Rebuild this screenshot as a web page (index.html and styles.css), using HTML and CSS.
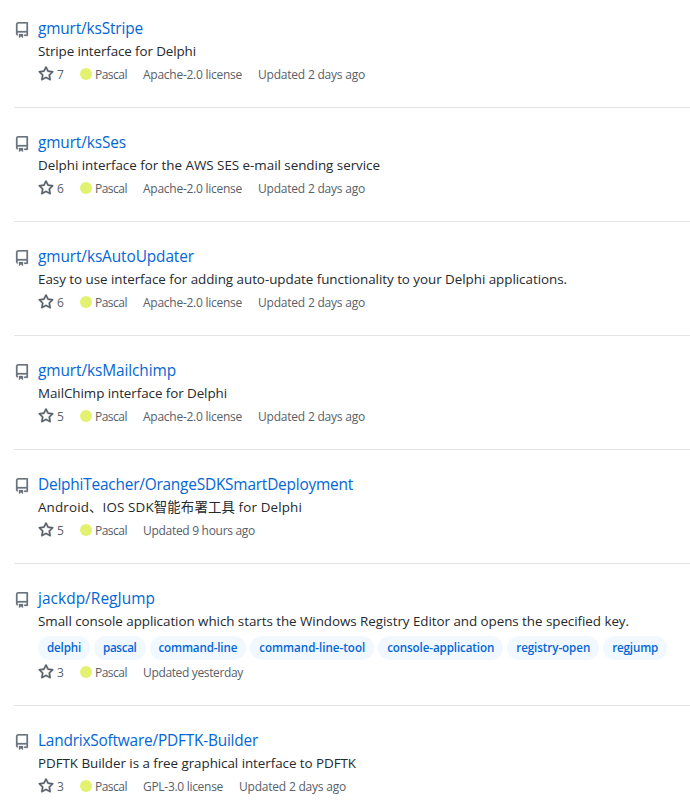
FILE: index.html
```
<!DOCTYPE html>
<html lang="en">
<head>
<meta charset="utf-8">
<title>Repositories</title>
<link rel="stylesheet" href="styles.css">
</head>
<body>
<ul class="repo-list" id="repos"></ul>
<script src="app.js"></script>
</body>
</html>
```
FILE: styles.css
```
* { box-sizing: border-box; }
body {
  margin: 0;
  height: 808px;
  overflow: hidden;
  background: #fff;
  color: #24292e;
  font: 13.4px/21px "Open Sans", "Noto Sans CJK SC", sans-serif;
}
.repo-list { list-style: none; margin: -6px 0 0 14px; padding: 0; }
.repo {
  display: flex;
  gap: 8px;
  padding: 24px 0 23px;
  border-bottom: 1px solid #e1e4e8;
}
.icon { display: block; flex: none; width: 16px; height: 16px; fill: #6a737d; stroke: #6a737d; stroke-width: .25; }
.repo-icon { margin-top: 4px; }
.body { flex: 1; min-width: 0; white-space: nowrap; }
.name { height: 23px; font-size: 15.4px; line-height: 22px; }
.name a { color: #0366d6; text-decoration: none; }
.name span, .desc span, .meta span, .topic span { display: inline-block; }
.desc { height: 21px; margin: 0; }
.topics { display: flex; gap: 4px; margin: 4px 0 1px; }
.topic {
  height: 24px;
  padding: 0 9px;
  border-radius: 12px;
  background: #f1f8ff;
  color: #0366d6;
  font-size: 11.6px;
  font-weight: 600;
  line-height: 24px;
  text-decoration: none;
}
.meta {
  display: flex;
  gap: 16px;
  height: 18px;
  margin-top: 4px;
  color: #586069;
  font-size: 12px;
  line-height: 18px;
}
.stars, .lang { display: flex; gap: 3px; }
.stars .icon { fill: #586069; stroke: #586069; }
.dot { width: 12px; height: 12px; margin-top: 2px; border-radius: 50%; background: #e3f171; }
```
FILE: app.js
```
const repoPath = "M2 2.5A2.5 2.5 0 014.5 0h8.75a.75.75 0 01.75.75v12.5a.75.75 0 01-.75.75h-2.5a.75.75 0 110-1.5h1.75v-2h-8a1 1 0 00-.714 1.7.75.75 0 01-1.072 1.05A2.495 2.495 0 012 11.5v-9zm10.5-1V9h-8c-.356 0-.694.074-1 .208V2.5a1 1 0 011-1h8zM5 12.25v3.25a.25.25 0 00.4.2l1.45-1.087a.25.25 0 01.3 0L8.6 15.7a.25.25 0 00.4-.2v-3.25a.25.25 0 00-.25-.25h-3.5a.25.25 0 00-.25.25z";
const starPath = "M8 .25a.75.75 0 01.673.418l1.882 3.815 4.21.612a.75.75 0 01.416 1.279l-3.046 2.97.719 4.192a.75.75 0 01-1.088.791L8 12.347l-3.766 1.98a.75.75 0 01-1.088-.79l.72-4.194L.818 6.374a.75.75 0 01.416-1.28l4.21-.611L7.327.668A.75.75 0 018 .25zm0 2.445L6.615 5.5a.75.75 0 01-.564.41l-3.097.45 2.24 2.184a.75.75 0 01.216.664l-.528 3.084 2.769-1.456a.75.75 0 01.698 0l2.77 1.456-.53-3.084a.75.75 0 01.216-.664l2.24-2.183-3.096-.45a.75.75 0 01-.564-.41L8 2.694v.001z";

// Text entries are [string, width in px].
const apache = ["Apache-2.0 license", 99];
const twoDays = ["Updated 2 days ago", 107];
const repos = [
  { name: ["gmurt/ksStripe", 105], desc: ["Stripe interface for Delphi", 158], stars: 7, info: [apache, twoDays] },
  { name: ["gmurt/ksSes", 88], desc: ["Delphi interface for the AWS SES e-mail sending service", 342], stars: 6, info: [apache, twoDays] },
  { name: ["gmurt/ksAutoUpdater", 156], desc: ["Easy to use interface for adding auto-update functionality to your Delphi applications.", 529], stars: 6, info: [apache, twoDays] },
  { name: ["gmurt/ksMailchimp", 138], desc: ["MailChimp interface for Delphi", 189], stars: 5, info: [apache, twoDays] },
  { name: ["DelphiTeacher/OrangeSDKSmartDeployment", 315], desc: ["Android、IOS SDK智能布署工具 for Delphi", 264], stars: 5, info: [["Updated 9 hours ago", 112]] },
  { name: ["jackdp/RegJump", 117], desc: ["Small console application which starts the Windows Registry Editor and opens the specified key.", 591], stars: 3,
    topics: [["delphi", 34], ["pascal", 33.5], ["command-line", 78.7], ["command-line-tool", 106], ["console-application", 107], ["registry-open", 74], ["regjump", 46]],
    info: [["Updated yesterday", 100]] },
  { name: ["LandrixSoftware/PDFTK-Builder", 220], desc: ["PDFTK Builder is a free graphical interface to PDFTK", 318], stars: 3, info: [["GPL-3.0 license", 80], twoDays] }
];

const icon = (d, cls) => `<svg class="icon ${cls}" viewBox="0 0 16 16" aria-hidden="true"><path fill-rule="evenodd" d="${d}"/></svg>`;
const fit = ([s, w]) => `<span data-width="${w}">${s}</span>`;

document.getElementById("repos").innerHTML = repos.map(r => `
<li class="repo">${icon(repoPath, "repo-icon")}
  <div class="body">
    <div class="name"><a href="#">${fit(r.name)}</a></div>
    <p class="desc">${fit(r.desc)}</p>
    ${r.topics ? `<div class="topics">${r.topics.map(t => `<a class="topic" href="#">${fit(t)}</a>`).join("")}</div>` : ""}
    <div class="meta">
      <div class="stars">${icon(starPath, "")}${fit([r.stars, 7])}</div>
      <div class="lang"><i class="dot"></i>${fit(["Pascal", 32])}</div>
      ${r.info.map(fit).join("")}
    </div>
  </div>
</li>`).join("");

// Track each label so it occupies its set width.
document.querySelectorAll("[data-width]").forEach(el => {
  const w = +el.dataset.width;
  const n = [...el.textContent].length;
  el.style.letterSpacing = (w - el.getBoundingClientRect().width) / n + "px";
  el.style.width = w + "px";
});
```
